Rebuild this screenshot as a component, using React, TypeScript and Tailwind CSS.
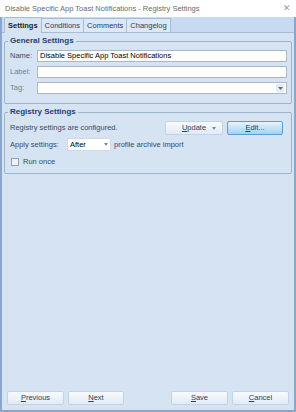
export default function App() {
  const font = { fontFamily: '"Liberation Sans", Arial, sans-serif' };
  const btn =
    "h-[14px] flex items-center justify-center rounded-[2px] border border-[#c3d2e6] bg-gradient-to-b from-[#f8fbfe] to-[#e1eaf5] text-[#2e3f55]";
  return (
    <div className="w-[296px] h-[412px] bg-white flex flex-col text-[7.5px] text-[#1b1b1b]" style={font}>
      {/* Title bar */}
      <div className="h-[17px] flex items-center justify-between pl-[5px] pr-[5px] bg-white">
        <span className="text-[#6b6b6b] text-[7.5px] leading-none">
          Disable Specific App Toast Notifications - Registry Settings
        </span>
        <span className="text-[#9a9a9a] text-[9px] leading-none">✕</span>
      </div>

      {/* Window body */}
      <div className="flex-1 flex flex-col bg-[#d6e3f3] border-l-2 border-r-2 border-b-2 border-[#8aa6cc]">
        {/* Tabs */}
        <div className="h-[16px] flex items-end bg-[#c7daf1] pl-[2px] border-b border-[#a7bcd8]">
          <div className="h-[16px] px-[3px] flex items-center font-bold bg-[#d6e3f3] border border-b-0 border-[#a7bcd8] -mb-px">
            Settings
          </div>
          <div className="h-[14px] px-[3px] flex items-center text-[#1e3d66] border border-l-0 border-b-0 border-[#a7bcd8] bg-[#dde8f6]">
            Conditions
          </div>
          <div className="h-[14px] px-[3px] flex items-center text-[#1e3d66] border border-l-0 border-b-0 border-[#a7bcd8] bg-[#dde8f6]">
            Comments
          </div>
          <div className="h-[14px] px-[3px] flex items-center text-[#1e3d66] border border-l-0 border-b-0 border-[#a7bcd8] bg-[#dde8f6]">
            Changelog
          </div>
        </div>

        <div className="flex-1 flex flex-col px-[2px] pt-[4px]">
          {/* General Settings */}
          <fieldset className="border border-[#9fb3cf] rounded-[2px] pl-[5px] pr-[4px] pb-[9px] pt-0">
            <legend className="px-[2px] -ml-[2px] font-bold text-[#1e3f6e] text-[8px] leading-none">
              General Settings
            </legend>
            <div className="flex flex-col gap-[4px] mt-[5px]">
              <div className="flex items-center">
                <span className="w-[27px] text-[#3a4a60]">Name:</span>
                <div className="flex-1 h-[12px] bg-white border border-[#abb7c8] flex items-center px-[2px] text-black leading-none">
                  Disable Specific App Toast Notifications
                </div>
              </div>
              <div className="flex items-center">
                <span className="w-[27px] text-[#6f7f94]">Label:</span>
                <div className="flex-1 h-[12px] bg-white border border-[#abb7c8]" />
              </div>
              <div className="flex items-center">
                <span className="w-[27px] text-[#6f7f94]">Tag:</span>
                <div className="flex-1 h-[12px] bg-white border border-[#abb7c8] flex items-center justify-end pr-[2px]">
                  <span className="w-[8px] h-[8px] bg-[#e4ebf4] flex items-center justify-center">
                    <svg width="5" height="3" viewBox="0 0 5 3">
                      <path d="M0 0h5L2.5 3z" fill="#5b6b80" />
                    </svg>
                  </span>
                </div>
              </div>
            </div>
          </fieldset>

          {/* Registry Settings */}
          <fieldset className="mt-[4px] border border-[#9fb3cf] rounded-[2px] pl-[5px] pr-[4px] pb-[6px] pt-0">
            <legend className="px-[2px] -ml-[2px] font-bold text-[#1e3f6e] text-[8px] leading-none">
              Registry Settings
            </legend>
            <div className="flex items-center justify-between mt-[5px]">
              <span className="text-[#3a4a60]">Registry settings are configured.</span>
              <div className="flex gap-[4px] pr-[4px]">
                <div className={`w-[58px] relative ${btn}`}>
                  <span>
                    <span className="underline">U</span>pdate
                  </span>
                  <svg className="absolute right-[6px]" width="4" height="3" viewBox="0 0 4 3">
                    <path d="M0 0h4L2 3z" fill="#7a8aa0" />
                  </svg>
                </div>
                <div className="w-[56px] h-[14px] flex items-center justify-center rounded-[2px] border border-[#5b9fd2] bg-gradient-to-b from-[#e6f4fd] via-[#c2e4fa] to-[#9fd4f5] text-[#2e3f55]">
                  <span>
                    <span className="underline">E</span>dit...
                  </span>
                </div>
              </div>
            </div>
            <div className="flex items-center mt-[3px]">
              <span className="w-[57px] whitespace-nowrap text-[#3a4a60]">Apply settings:</span>
              <div className="w-[44px] h-[13px] bg-white border border-[#d0dae6] flex items-center justify-between pl-[2px] pr-[2px] text-black">
                <span>After</span>
                <svg width="4" height="3" viewBox="0 0 4 3">
                  <path d="M0 0h4L2 3z" fill="#7a8aa0" />
                </svg>
              </div>
              <span className="ml-[3px] text-[#3a4a60]">profile archive import</span>
            </div>
            <div className="flex items-center mt-[5px] gap-[4px] pl-[1px]">
              <span className="w-[8px] h-[8px] border border-[#8f9fb4] bg-[#eef2f7]" />
              <span className="text-[#3a4a60]">Run once</span>
            </div>
          </fieldset>

          <div className="flex-1" />

          {/* Bottom buttons */}
          <div className="flex items-center justify-between pb-[5px] px-[3px]">
            <div className="flex gap-[4px]">
              <div className={`w-[57px] ${btn}`}>
                <span>
                  <span className="underline">P</span>revious
                </span>
              </div>
              <div className={`w-[56px] ${btn}`}>
                <span>
                  <span className="underline">N</span>ext
                </span>
              </div>
            </div>
            <div className="flex gap-[4px]">
              <div className={`w-[57px] ${btn}`}>
                <span>
                  <span className="underline">S</span>ave
                </span>
              </div>
              <div className={`w-[57px] ${btn}`}>
                <span>
                  <span className="underline">C</span>ancel
                </span>
              </div>
            </div>
          </div>
        </div>
      </div>
    </div>
  );
}
